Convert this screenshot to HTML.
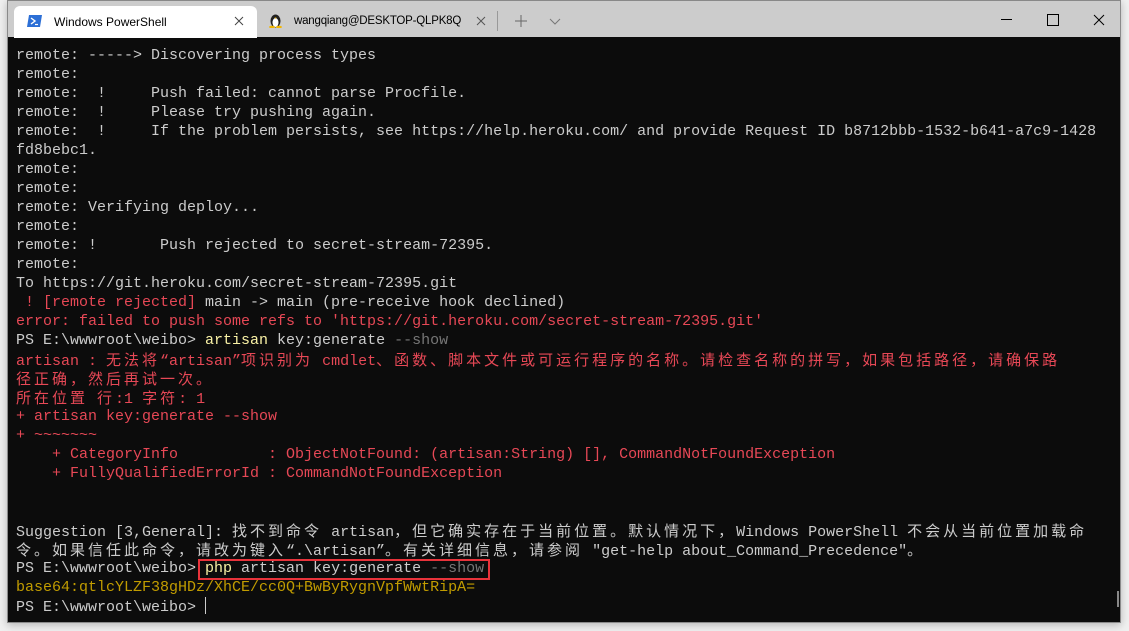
<!DOCTYPE html>
<html><head><meta charset="utf-8"><style>
html,body{margin:0;padding:0;width:1129px;height:631px;overflow:hidden;background:#f0f0f0;}
.win{position:absolute;left:7px;top:0;width:1114px;height:623px;background:#0c0c0c;border:1px solid #8a8a8a;border-top:none;box-sizing:border-box;box-shadow:0 2px 8px rgba(0,0,0,.25);overflow:hidden;}
.title{position:absolute;left:0;top:0;width:100%;height:37px;background:#cccccc;border-top:1px solid #888;box-sizing:border-box;font:12px "Liberation Sans",sans-serif;color:#000;}
.title span{position:absolute;white-space:nowrap;}
.term{position:absolute;left:8px;top:46px;font:15px "Liberation Mono","Noto Sans CJK SC",monospace;color:#cccccc;white-space:normal;}
.term div{height:19px;line-height:19px;overflow:visible;white-space:pre;}
.c{font-family:"Noto Sans CJK SC",sans-serif;letter-spacing:3px;font-size:15px;line-height:19px;}
.r{color:#e74856}.y{color:#f9f1a5}.g{color:#767676}.o{color:#c19c00}
.box{position:absolute;left:190px;top:559px;width:292px;height:21px;border:2px solid #e8333b;box-sizing:border-box;}
</style></head><body>
<div class="win">
<div class="title">
 <div style="position:absolute;left:6px;top:5px;width:243px;height:32px;background:#fff;border-radius:6px 6px 0 0"></div>
 <svg style="position:absolute;left:19px;top:14px" width="15" height="12"><polygon points="2,0 15,0 13,12 0,12" fill="#2c6fd6"/><polyline points="4,3 8,6 4,9" fill="none" stroke="#fff" stroke-width="1.4"/><line x1="8" y1="9.5" x2="11" y2="9.5" stroke="#fff" stroke-width="1.2"/></svg>
 <span style="left:46px;top:14px">Windows PowerShell</span>
 <svg style="position:absolute;left:226px;top:15px" width="10" height="10"><path d="M1 1L9 9M9 1L1 9" stroke="#444" stroke-width="1"/></svg>
 <svg style="position:absolute;left:261px;top:12px" width="13" height="15"><ellipse cx="6.5" cy="8" rx="5" ry="6.5" fill="#222"/><ellipse cx="6.5" cy="9.5" rx="3" ry="4.5" fill="#fff"/><ellipse cx="3" cy="14" rx="3" ry="1.3" fill="#f2b600"/><ellipse cx="10" cy="14" rx="3" ry="1.3" fill="#f2b600"/><path d="M5.5 4.5 L7.5 4.5 L6.5 6Z" fill="#f2b600"/></svg>
 <span style="left:286px;top:14px;font-size:11.5px;letter-spacing:-0.2px">wangqiang@DESKTOP-QLPK8Q</span>
 <svg style="position:absolute;left:468px;top:15px" width="10" height="10"><path d="M1 1L9 9M9 1L1 9" stroke="#555" stroke-width="1"/></svg>
 <div style="position:absolute;left:489px;top:10px;width:1px;height:20px;background:#999"></div>
 <svg style="position:absolute;left:507px;top:14px" width="12" height="12"><path d="M6 0V12M0 6H12" stroke="#666" stroke-width="1"/></svg>
 <svg style="position:absolute;left:541px;top:17px" width="12" height="8"><polyline points="1,1 6,6 11,1" fill="none" stroke="#777" stroke-width="1"/></svg>
 <div style="position:absolute;left:993px;top:18px;width:11px;height:1px;background:#000"></div>
 <div style="position:absolute;left:1039px;top:13px;width:10px;height:10px;border:1px solid #000"></div>
 <svg style="position:absolute;left:1085px;top:13px" width="12" height="12"><path d="M1 1L11 11M11 1L1 11" stroke="#000" stroke-width="1"/></svg>
</div>
<div class="term"><div>remote: -----&gt; Discovering process types</div><div>remote:</div><div>remote:  !     Push failed: cannot parse Procfile.</div><div>remote:  !     Please try pushing again.</div><div>remote:  !     If the problem persists, see https://help.heroku.com/ and provide Request ID b8712bbb-1532-b641-a7c9-1428</div><div>fd8bebc1.</div><div>remote:</div><div>remote:</div><div>remote: Verifying deploy...</div><div>remote:</div><div>remote: !       Push rejected to secret-stream-72395.</div><div>remote:</div><div>To https://git.heroku.com/secret-stream-72395.git</div><div><span class="r"> ! [remote rejected]</span> main -&gt; main (pre-receive hook declined)</div><div class="r">error: failed to push some refs to 'https://git.heroku.com/secret-stream-72395.git'</div><div>PS E:\wwwroot\weibo&gt; <span class="y">artisan</span> key:generate <span class="g">--show</span></div><div class="r">artisan : <span class="c">无法将</span>“artisan”<span class="c">项识别为</span> cmdlet<span class="c">、函数、脚本文件或可运行程序的名称。请检查名称的拼写，如果包括路径，请确保路</span></div><div class="r"><span class="c">径正确，然后再试一次。</span></div><div class="r"><span class="c">所在位置</span> <span class="c">行</span>:1 <span class="c">字符</span>: 1</div><div class="r">+ artisan key:generate --show</div><div class="r">+ ~~~~~~~</div><div class="r">    + CategoryInfo          : ObjectNotFound: (artisan:String) [], CommandNotFoundException</div><div class="r">    + FullyQualifiedErrorId : CommandNotFoundException</div><div></div><div></div><div>Suggestion [3,General]: <span class="c">找不到命令</span> artisan<span class="c">，但它确实存在于当前位置。默认情况下，</span>Windows PowerShell <span class="c">不会从当前位置加载命</span></div><div><span class="c">令。如果信任此命令，请改为键入</span>“.\artisan”<span class="c">。有关详细信息，请参阅</span> "get-help about_Command_Precedence"<span class="c">。</span></div><div>PS E:\wwwroot\weibo&gt; <span class="y">php</span> artisan key:generate <span class="g">--show</span></div><div class="o">base64:qtlcYLZF38gHDz/XhCE/cc0Q+BwByRygnVpfWwtRipA=</div><div>PS E:\wwwroot\weibo&gt; <span style="display:inline-block;width:1px;height:17px;background:#ccc;vertical-align:-3px"></span></div></div>
<div class="box"></div>
<div style="position:absolute;left:1109px;top:591px;width:2px;height:16px;background:#888"></div>
</div>
</body></html>
